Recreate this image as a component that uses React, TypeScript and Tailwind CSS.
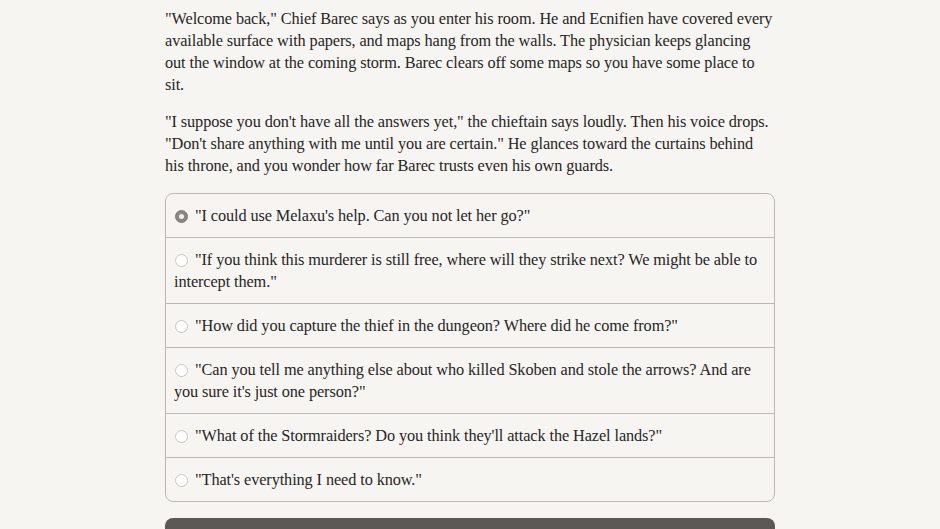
import React from "react";

const choices: { text: string; selected?: boolean }[] = [
  { text: '"I could use Melaxu\'s help. Can you not let her go?"', selected: true },
  { text: '"If you think this murderer is still free, where will they strike next? We might be able to intercept them."' },
  { text: '"How did you capture the thief in the dungeon? Where did he come from?"' },
  { text: '"Can you tell me anything else about who killed Skoben and stole the arrows? And are you sure it\'s just one person?"' },
  { text: '"What of the Stormraiders? Do you think they\'ll attack the Hazel lands?"' },
  { text: '"That\'s everything I need to know."' },
];

function Radio({ selected }: { selected?: boolean }) {
  return (
    <span className="inline-block align-middle relative -top-[1px] mr-[7px] ml-[1px]">
      {selected ? (
        <span className="flex items-center justify-center w-[13px] h-[13px] rounded-full bg-[#8a8683] border border-[#7d7976]">
          <span className="block w-[5px] h-[5px] rounded-full bg-[#f1eeeb]" />
        </span>
      ) : (
        <span className="block w-[13px] h-[13px] rounded-full bg-white border border-[#c9c5c2]" />
      )}
    </span>
  );
}

export default function App() {
  return (
    <div
      className="w-full h-[529px] overflow-hidden bg-[#f7f5f2] text-[#262524]"
      style={{ fontFamily: '"Liberation Serif", "Times New Roman", serif' }}
    >
      <div className="w-[610px] mx-auto pt-[8px] text-[16.3px] tracking-[-0.1px] leading-[22px]">
        <p className="mb-[15px]">
          "Welcome back," Chief Barec says as you enter his room. He and Ecnifien have covered every
          <br />
          available surface with papers, and maps hang from the walls. The physician keeps glancing
          <br />
          out the window at the coming storm. Barec clears off some maps so you have some place to
          <br />
          sit.
        </p>
        <p className="mb-[16px]">
          "I suppose you don't have all the answers yet," the chieftain says loudly. Then his voice
          drops.
          <br />
          "Don't share anything with me until you are certain." He glances toward the curtains behind
          <br />
          his throne, and you wonder how far Barec trusts even his own guards.
        </p>
        <div className="border border-[#bdb8b5] rounded-[8px] overflow-hidden">
          {choices.map((c, i) => (
            <div
              key={i}
              className={`px-[8px] pt-[11px] pb-[10px] ${i > 0 ? "border-t border-[#bdb8b5]" : ""}`}
            >
              <Radio selected={c.selected} />
              {c.text}
            </div>
          ))}
        </div>
        <div className="mt-[16px] h-[40px] rounded-[8px] bg-[#5b5856] text-white flex items-start justify-center pt-[8px] font-bold">
          Next
        </div>
      </div>
    </div>
  );
}
